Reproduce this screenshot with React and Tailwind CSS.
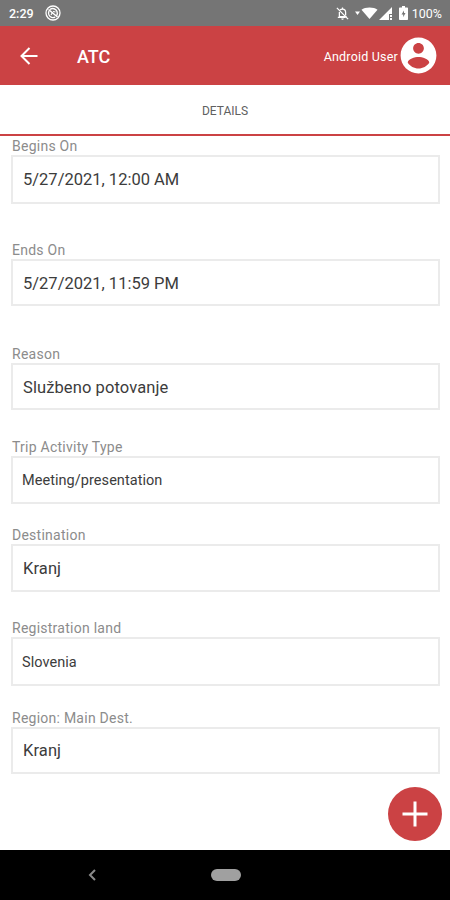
const fields = [
  { label: 'Begins On', value: '5/27/2021, 12:00 AM', box: 'h-[49px] pl-[10px] pt-[2px] text-[16.5px]', gap: 'mb-[37px]' },
  { label: 'Ends On', value: '5/27/2021, 11:59 PM', box: 'h-[47px] pl-[10px] pt-[3px] text-[16.5px]', gap: 'mb-[39px]' },
  { label: 'Reason', value: 'Službeno potovanje', box: 'h-[47px] pl-[10px] pt-[3px] text-[16.5px] tracking-[0.1px]', gap: 'mb-[28px]' },
  { label: 'Trip Activity Type', value: 'Meeting/presentation', box: 'h-[48px] pl-[9px] pt-[2px] text-[14.5px] tracking-[0.05px]', gap: 'mb-[22px]' },
  { label: 'Destination', value: 'Kranj', box: 'h-[48px] pl-[10px] pt-[2px] text-[16.5px] tracking-[0.1px]', gap: 'mb-[27px]' },
  { label: 'Registration land', value: 'Slovenia', box: 'h-[49px] pl-[9px] pt-[2px] text-[14.5px] tracking-[0.05px]', gap: 'mb-[23px]' },
  { label: 'Region: Main Dest.', value: 'Kranj', box: 'h-[47px] pl-[10px] pt-[2px] text-[16.5px] tracking-[0.1px]', gap: '' },
];

function StatusBar() {
  return (
    <div className="flex h-[26px] items-center bg-[#757575] pl-[9px] pr-[8px] text-[12.5px] font-medium text-white">
      <span className="mt-[2px]">2:29</span>
      <svg className="ml-[11px] h-4 w-4" viewBox="0 0 16 16" fill="none" stroke="currentColor">
        <circle cx="8" cy="8" r="7" strokeWidth="1.3" />
        <path d="M5 4.500C7.500 2.600 11 3.800 12 6.500c.6 1.700.3 3.200-.5 4.300M4 6c-1 2.500 0 5.300 2.500 6.300 1.300.500 2.600.3 3.700-.2" strokeWidth="1.4" />
        <path d="M3.500 4.500l9 7.500" strokeWidth="1.6" />
        <path d="M6 10l1.500-2.500M8 6.500l2.500.500" strokeWidth="1.2" />
      </svg>
      <div className="ml-auto flex items-center">
        <svg className="h-[15px] w-[15px]" viewBox="0 0 24 24" fill="none" stroke="currentColor" strokeWidth="2">
          <path d="M8 6.500C9 5.500 10.500 5 12 5c3.300 0 5 2.500 5 5.500V15M7 9.500V17h11.500M4.500 18H17" />
          <path d="M12 2.500V5M3 3l18 18" />
          <path d="M10 20h4c0 1.200-.9 2-2 2s-2-.8-2-2z" fill="currentColor" stroke="none" />
        </svg>
        <svg className="ml-[5px] h-[12px] w-[23px]" viewBox="0 0 23 12" fill="currentColor">
          <path d="M0 4.500h5L2.500 8z" />
          <path d="M6.500 2.800C10 -.3 19 -.3 22.500 2.800L14.500 12z" />
        </svg>
        <svg className="ml-[1px] h-[13px] w-[13px]" viewBox="0 0 13 13" fill="currentColor">
          <path d="M13 0v7h-3v6H0z" />
          <path d="M11 8h2v2h-2zM11 11h2v2h-2z" />
        </svg>
        <svg className="ml-[7px] h-[14px] w-[9px]" viewBox="0 0 9 14">
          <path d="M3 0h3v1.500h2.200q.8 0 .8.800v10.900q0 .8-.8.800H.8q-.8 0-.8-.8V2.300q0-.8.8-.8H3z" fill="#fff" />
          <path d="M5 4.500L2.500 8.500h1.700v2.800L6.500 7H5z" fill="#757575" />
        </svg>
        <span className="ml-[4px] mt-[2px] font-normal">100%</span>
      </div>
    </div>
  );
}

function Header() {
  return (
    <header className="flex h-[59px] items-center bg-[#cb4244] pl-[20px] pr-[10px] text-white">
      <svg className="h-[18px] w-[18px]" viewBox="0 0 18 18" fill="none" stroke="currentColor" strokeWidth="2">
        <path d="M17.500 9H1.800M9.500 1L1.500 9l8 8" />
      </svg>
      <h1 className="ml-[39px] mt-[2px] text-[18px] font-medium">ATC</h1>
      <span className="ml-auto mt-[3px] text-[12.5px] tracking-[0.2px]">Android User</span>
      <svg className="-ml-px h-[43px] w-[43px]" viewBox="0 0 24 24" fill="currentColor">
        <path d="M12 2C6.480 2 2 6.480 2 12s4.480 10 10 10 10-4.480 10-10S17.520 2 12 2zm0 3c1.660 0 3 1.340 3 3s-1.340 3-3 3-3-1.340-3-3 1.340-3 3-3zm0 14.200c-2.500 0-4.710-1.280-6-3.220.03-1.990 4-3.080 6-3.080 1.990 0 5.970 1.090 6 3.080-1.290 1.940-3.500 3.220-6 3.220z" />
      </svg>
    </header>
  );
}

function Field({ label, value, box, gap }) {
  return (
    <div className={gap}>
      <div className="h-[18px] pl-px text-[14px] leading-[19px] tracking-[0.25px] text-[#8c8c8c]">{label}</div>
      <div className={`flex items-center border-2 border-[#ebebeb] text-[#3c3c3c] ${box}`}>{value}</div>
    </div>
  );
}

function App() {
  return (
    <div className="relative flex h-[900px] w-[450px] flex-col overflow-hidden bg-white font-['Roboto',sans-serif]">
      <StatusBar />
      <Header />
      <div className="flex h-[51px] items-center justify-center border-b-2 border-[#cb4244] pt-[3px] text-[12px] text-[#606060]">
        DETAILS
      </div>
      <main className="flex-1 pl-[11px] pr-[10px] pt-[1px]">
        {fields.map((field) => (
          <Field key={field.label} {...field} />
        ))}
      </main>
      <button
        aria-label="Add"
        className="absolute bottom-[59px] right-[8px] flex h-[54px] w-[54px] items-center justify-center rounded-full bg-[#cb4244] text-white"
      >
        <svg className="h-[26px] w-[26px]" viewBox="0 0 26 26" stroke="currentColor" strokeWidth="3">
          <path d="M13 .5v25M.5 13h25" />
        </svg>
      </button>
      <nav className="flex h-[50px] items-center bg-black pl-[88px]">
        <svg className="h-[12px] w-[8px]" viewBox="0 0 8 12" fill="none" stroke="#8a8a8a" strokeWidth="2">
          <path d="M7 1L2 6l5 5" />
        </svg>
        <div className="ml-[115px] h-[12px] w-[30px] rounded-full bg-[#a0a0a0]" />
      </nav>
    </div>
  );
}

export default App;
